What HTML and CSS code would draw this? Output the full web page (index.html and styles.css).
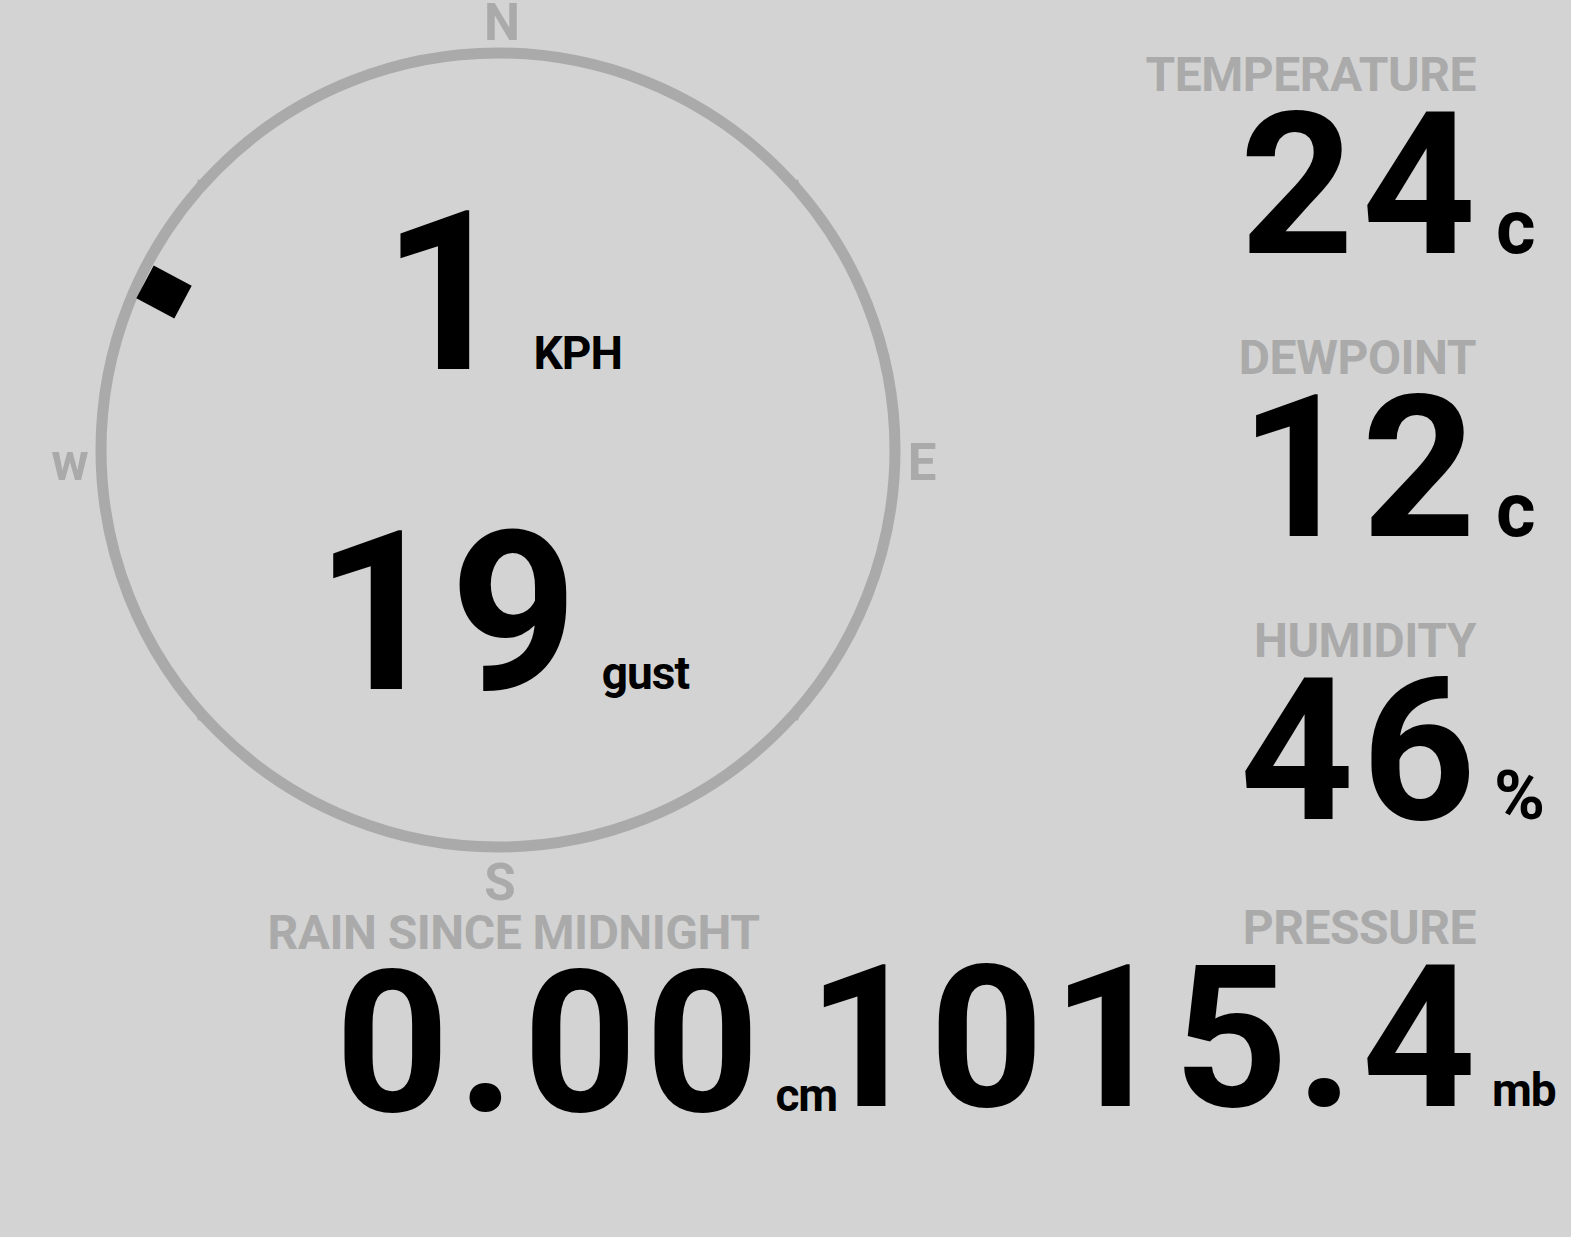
FILE: index.html
```html
<!DOCTYPE html>
<html lang="en">
<head>
  <meta charset="UTF-8" />
  <meta name="viewport" content="width=device-width, initial-scale=1.0"/>
  <title>Weather Station</title>
  <link rel="stylesheet" href="styles.css">
</head>
<body>

  <main class="board">
    <div class="top">

      <section class="compass">
        <svg class="compass-dial" viewBox="0 0 1000 904" width="1000" height="904">
          <circle cx="498" cy="450" r="397" fill="none" stroke="#aaa" stroke-width="11"/>
          <g class="notches" stroke="#aaa" stroke-width="4">
            <line x1="200" y1="180" x2="196" y2="192"/>
            <line x1="796" y1="180" x2="800" y2="192"/>
            <line x1="200" y1="720" x2="196" y2="708"/>
            <line x1="796" y1="720" x2="800" y2="708"/>
          </g>
          <text class="cardinal" x="502" y="40">N</text>
          <text class="cardinal" x="922" y="480">E</text>
          <text class="cardinal" x="500" y="900">S</text>
          <text class="cardinal" x="70" y="480">w</text>
          <rect class="needle" x="-21.5" y="-18.5" width="43" height="37" transform="translate(164 292) rotate(28)"/>
        </svg>

        <div class="speed">
          <span class="speed-num">1</span>
          <span class="speed-unit">KPH</span>
        </div>
        <div class="speed">
          <span class="speed-num">19</span>
          <span class="speed-unit">gust</span>
        </div>
      </section>

      <section class="readings">
        <div class="reading">
          <div class="label">TEMPERATURE</div>
          <div class="value"><span class="num">24</span><span class="unit">c</span></div>
        </div>
        <div class="reading">
          <div class="label">DEWPOINT</div>
          <div class="value"><span class="num">12</span><span class="unit">c</span></div>
        </div>
        <div class="reading">
          <div class="label">HUMIDITY</div>
          <div class="value"><span class="num">46</span><span class="unit unit-pct">%</span></div>
        </div>
      </section>

    </div>

    <div class="bottom">
      <div class="reading rain">
        <div class="label">RAIN SINCE MIDNIGHT</div>
        <div class="value"><span class="num">0.00</span><span class="unit unit-small">cm</span></div>
      </div>
      <div class="reading">
        <div class="label">PRESSURE</div>
        <div class="value"><span class="num">1015.4</span><span class="unit unit-small">mb</span></div>
      </div>
    </div>
  </main>

</body>
</html>
```

FILE: styles.css
```css
body {
  margin: 0;
  background-color: #d3d3d3;
  color: #000;
  font-family: Roboto, "Liberation Sans", sans-serif;
  font-weight: 700;
}

.board {
  width: 1571px;
  height: 1237px;
  overflow: hidden;
}

.top {
  display: grid;
  grid-template-columns: 1000px 1fr;
  height: 904px;
}

/* compass */

.compass {
  position: relative;
  display: flex;
  flex-direction: column;
  align-items: center;
  gap: 142px;
  padding-top: 205px;
  padding-left: 4px;
  box-sizing: border-box;
}

.compass-dial {
  position: absolute;
  top: 0;
  left: 0;
  overflow: visible;
}

.cardinal {
  font-family: Roboto, sans-serif;
  font-weight: 700;
  font-size: 51px;
  fill: #aaa;
  text-anchor: middle;
}

.needle {
  fill: #000;
}

.speed {
  position: relative;
  display: flex;
  align-items: baseline;
  gap: 24px;
}

.speed-num {
  font-size: 222px;
  line-height: 0.8;
  letter-spacing: 8px;
  margin-right: -8px;
}

.speed-unit {
  font-size: 46px;
  line-height: 1;
  letter-spacing: -1px;
}

/* readings */

.readings {
  display: flex;
  flex-direction: column;
  align-items: flex-end;
  gap: 69px;
  padding-top: 51px;
}

.reading {
  --unit-w: 95px;
  display: flex;
  flex-direction: column;
  align-items: flex-end;
}

.reading.rain {
  --unit-w: 86px;
  padding-top: 5px;
  margin-right: -38px;
}

.label {
  font-size: 48px;
  line-height: 1;
  letter-spacing: -0.5px;
  color: #aaa;
  padding-right: var(--unit-w);
}

.value {
  display: flex;
  align-items: baseline;
  margin-top: 7px;
}

.num {
  font-size: 199px;
  line-height: 0.8;
  letter-spacing: 8px;
  margin-right: -8px;
}

.unit {
  width: var(--unit-w);
  box-sizing: border-box;
  padding-left: 20px;
  font-size: 76px;
  line-height: 1;
}

.unit-pct {
  padding-left: 18px;
  font-size: 69px;
}

.unit-small {
  padding-left: 16px;
  font-size: 46px;
  letter-spacing: -1px;
}

.bottom {
  display: flex;
  justify-content: flex-end;
  align-items: flex-start;
}
```
